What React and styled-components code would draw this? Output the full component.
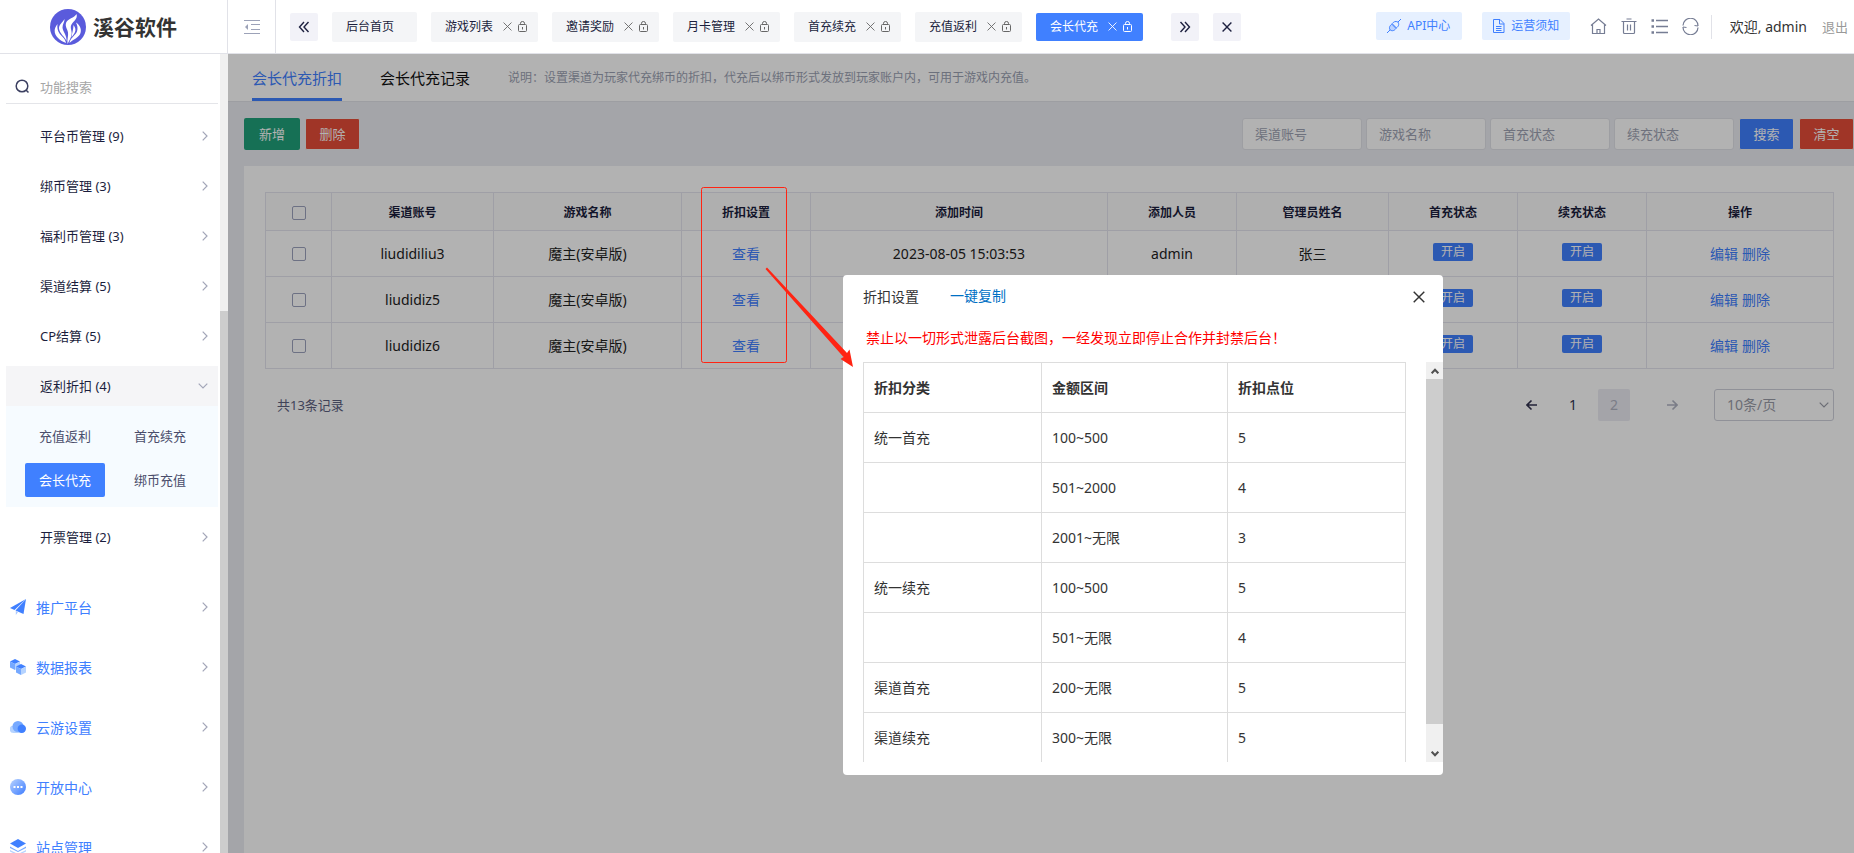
import React from "react";
import styled, { createGlobalStyle } from "styled-components";

const GlobalStyle = createGlobalStyle`
  *, *::before, *::after { box-sizing: border-box; }
  body {
    margin: 0;
    font-family: "Noto Sans", "Noto Sans CJK SC", sans-serif;
    font-size: 14px;
    line-height: 20px;
    color: #1b1e3d;
    background: #fff;
  }
  button, input, select { font: inherit; color: inherit; }
  button { border: 0; padding: 0; background: none; cursor: pointer; }
  a { color: inherit; text-decoration: none; }
  ul { list-style: none; margin: 0; padding: 0; }
`;

const Page = styled.div`
  display: flex;
  flex-direction: column;
  height: 100vh;
  overflow: hidden;
`;

/* ---------- header ---------- */

const Header = styled.header`
  display: flex;
  align-items: stretch;
  flex: none;
  height: 54px;
  border-bottom: 1px solid #e1e2e8;
  background: #fff;
`;

const Brand = styled.a`
  display: flex;
  align-items: center;
  justify-content: center;
  gap: 7px;
  flex: none;
  width: 228px;
  border-right: 1px solid #e1e2e8;
  font-size: 21px;
  line-height: 30px;
  font-weight: 700;
  color: #333;
`;

const CollapseButton = styled.button`
  display: flex;
  align-items: center;
  justify-content: center;
  width: 48px;
  border-right: 1px solid #e1e2e8;
`;

const TabStrip = styled.nav`
  display: flex;
  align-items: center;
  gap: 14px;
  flex: 1;
  min-width: 0;
  padding-left: 14px;
`;

const SquareButton = styled.button`
  display: flex;
  align-items: center;
  justify-content: center;
  width: 28px;
  height: 28px;
  border-radius: 2px;
  background: #f2f2f8;
  color: #1e2140;
  margin-left: ${(p) => (p.$spaced ? "14px" : "0")};
`;

const PageTab = styled.div`
  display: flex;
  align-items: center;
  height: ${(p) => (p.$active ? "28px" : "30px")};
  padding: 0 10px 0 14px;
  border-radius: 2px;
  font-size: 12px;
  background: ${(p) => (p.$active ? "#4080ff" : "#f4f5f7")};
  color: ${(p) => (p.$active ? "#fff" : "#1b1e3d")};
  white-space: nowrap;
`;

const HomeTab = styled(PageTab)`
  width: 85px;
`;

const TabIcon = styled.button`
  display: flex;
  color: ${(p) => (p.$active ? "#fff" : "#666")};
  margin-left: ${(p) => p.$gap};
`;

const HeaderTools = styled.div`
  display: flex;
  align-items: center;
  flex: none;
  padding-right: 6px;
`;

const HelpLink = styled.a`
  display: flex;
  align-items: center;
  justify-content: center;
  gap: 6px;
  width: ${(p) => p.$width};
  height: 28px;
  margin-right: 20px;
  margin-bottom: 2px;
  border-radius: 2px;
  background: #e6f0ff;
  color: #4080ff;
  font-size: 12px;
`;

const IconRow = styled.div`
  display: flex;
  gap: 14px;
  color: #767d94;
  button { display: flex; }
`;

const Account = styled.div`
  display: flex;
  align-items: center;
  gap: 15px;
  margin-left: 12px;
  padding-left: 18px;
  height: 24px;
  border-left: 1px solid #e1e2e8;
  color: #333;
  white-space: nowrap;
  a { font-size: 13px; color: #999; }
`;

/* ---------- sidebar ---------- */

const Body = styled.div`
  display: flex;
  flex: 1;
  min-height: 0;
`;

const Sidebar = styled.aside`
  display: flex;
  flex: none;
  width: 228px;
  overflow: hidden;
`;

const SidebarContent = styled.div`
  flex: 1;
  padding: 16px 2px 0 6px;
`;

const SidebarTrack = styled.div`
  width: 8px;
  padding-top: 257px;
  background: #f0f0f0;
`;

const SidebarThumb = styled.div`
  height: 100%;
  background: #cdcdcd;
`;

const Search = styled.label`
  display: flex;
  align-items: center;
  gap: 10px;
  height: 34px;
  padding-left: 9px;
  border-bottom: 1px solid #e4e5e9;
  input {
    width: 150px;
    border: 0;
    outline: 0;
    padding: 0;
    background: none;
    font-size: 13px;
  }
  input::placeholder { color: #a6a6a6; }
`;

const Menu = styled.ul`
  display: flex;
  flex-direction: column;
  gap: 10px;
  padding-top: 12px;
`;

const MenuLink = styled.button`
  display: flex;
  align-items: center;
  justify-content: space-between;
  width: 100%;
  height: 40px;
  padding: 0 10px 0 34px;
  font-size: 13px;
  text-align: left;
  background: ${(p) => (p.$open ? "#f5f5f7" : "none")};
`;

const SubMenu = styled.ul`
  display: grid;
  grid-template-columns: 80px 80px;
  gap: 10px 15px;
  padding: 13px 0 10px 19px;
  background: #f6fbff;
`;

const SubLink = styled.a`
  display: block;
  padding: 7px 0;
  border-radius: 2px;
  font-size: 13px;
  text-align: center;
  background: ${(p) => (p.$active ? "#4080ff" : "none")};
  color: ${(p) => (p.$active ? "#fff" : "#4a4d6b")};
`;

const GroupList = styled.ul`
  padding-top: 20px;
`;

const GroupLink = styled.button`
  display: flex;
  align-items: center;
  gap: 10px;
  width: 100%;
  height: 60px;
  padding: 0 10px 0 4px;
  color: #4080ff;
  text-align: left;
  span { flex: 1; padding-top: 2px; }
`;

/* ---------- main ---------- */

const Main = styled.main`
  position: relative;
  display: flex;
  flex-direction: column;
  flex: 1;
  min-width: 0;
  overflow: hidden;
  background: #ebedf3;
`;

const Overlay = styled.div`
  position: absolute;
  inset: 0;
  background: rgba(0, 0, 0, 0.3);
`;

const SectionTabs = styled.nav`
  display: flex;
  align-items: stretch;
  gap: 38px;
  flex: none;
  height: 48px;
  padding-left: 24px;
  border-bottom: 1px solid #e1e2e8;
  background: #fff;
`;

const SectionTab = styled.a`
  display: flex;
  align-items: center;
  padding-top: 3px;
  font-size: 15px;
  color: ${(p) => (p.$active ? "#4080ff" : "#111")};
  border-bottom: 3px solid ${(p) => (p.$active ? "#4080ff" : "transparent")};
`;

const Note = styled.p`
  margin: 0;
  padding-top: 14px;
  font-size: 12px;
  color: #9ba1b2;
`;

const Toolbar = styled.div`
  display: flex;
  align-items: center;
  justify-content: space-between;
  flex: none;
  height: 64px;
  padding-left: 16px;
`;

const ActionGroup = styled.div`
  display: flex;
  align-items: center;
  gap: 5px;
`;

const FilterGroup = styled.div`
  display: flex;
  gap: 4px;
`;

const tones = { green: "#20a17a", red: "#e64c38", blue: "#4080ff" };

const ActionButton = styled.button`
  flex: none;
  width: ${(p) => (p.$tone === "green" ? "56px" : "55px")};
  height: 32px;
  border: ${(p) => (p.$tone === "green" ? "0" : "1px solid #eee")};
  border-radius: 2px;
  background: ${(p) => tones[p.$tone]};
  color: #fff;
  font-size: 13px;
`;

const Filter = styled.input`
  width: 120px;
  height: 32px;
  padding: 0 12px;
  border: 1px solid #e1e2e8;
  border-radius: 3px;
  background: #fff;
  font-size: 13px;
  &::placeholder { color: #9ea3b3; }
`;

const Card = styled.section`
  flex: 1;
  margin-left: 16px;
  padding: 26px 20px 0 21px;
  background: #fff;
`;

const DataTable = styled.table`
  width: 100%;
  table-layout: fixed;
  border-collapse: collapse;
  color: #222;
  text-align: center;
  th, td {
    border: 1px solid #e4e4ee;
    padding: 0;
  }
  th {
    height: 38px;
    padding-top: 2px;
    background: #fbfbfb;
    color: #1b1e3d;
    font-size: 12px;
  }
  td { height: 46px; }
`;

const Check = styled.input`
  appearance: none;
  display: block;
  width: 14px;
  height: 14px;
  margin: 0 auto;
  border: 1px solid #9da2bd;
  border-radius: 2px;
`;

const CellLink = styled.a`
  color: #4080ff;
  & + & { margin-left: 4px; }
`;

const StatusButton = styled.button`
  display: block;
  width: 40px;
  height: 18px;
  margin: 0 auto 4px;
  border-radius: 2px;
  background: #4080ff;
  color: #fff;
  font-size: 12px;
  line-height: 18px;
`;

const Footer = styled.footer`
  display: flex;
  align-items: center;
  justify-content: space-between;
  padding: 20px 0 0 12px;
  font-size: 13px;
  color: #5c607f;
`;

const Pager = styled.nav`
  display: flex;
  align-items: center;
  gap: 9px;
`;

const PageButton = styled.button`
  display: flex;
  align-items: center;
  justify-content: center;
  width: 32px;
  height: 32px;
  border-radius: 2px;
  font-size: 14px;
  background: ${(p) => (p.$current ? "#ebebf3" : "none")};
  color: ${(p) => (p.$muted ? "#b0b3c2" : "#333350")};
  margin-left: ${(p) => (p.$apart ? "17px" : "0")};
`;

const SizePicker = styled.label`
  position: relative;
  display: flex;
  align-items: center;
  margin-left: 17px;
  color: #9a9ca8;
  select {
    appearance: none;
    width: 120px;
    height: 32px;
    padding: 0 12px;
    border: 1px solid #ced0da;
    border-radius: 3px;
    background: none;
    font-size: 14px;
  }
  svg {
    position: absolute;
    right: 5px;
    pointer-events: none;
  }
`;

/* ---------- dialog ---------- */

const Dialog = styled.div`
  position: absolute;
  left: 615px;
  top: 221px;
  width: 600px;
  height: 500px;
  display: flex;
  flex-direction: column;
  border-radius: 4px;
  background: #fff;
  color: #333;
`;

const DialogHead = styled.div`
  display: flex;
  align-items: center;
  height: 44px;
  padding: 0 18px 0 20px;
  h2 { margin: 0; font-size: 14px; font-weight: 400; }
  a { flex: 1; margin-left: 31px; padding-bottom: 2px; color: #0070c4; }
  button { display: flex; }
`;

const Warning = styled.p`
  margin: 0;
  padding: 9px 0 14px 23px;
  color: #f00;
`;

const DialogBody = styled.div`
  display: flex;
  justify-content: space-between;
  height: 400px;
  padding-left: 20px;
  overflow: hidden;
`;

const PriceTable = styled.table`
  width: 543px;
  table-layout: fixed;
  border-collapse: collapse;
  align-self: flex-start;
  text-align: left;
  th, td {
    height: 50px;
    border: 1px solid #ddd;
    padding: 0 10px;
  }
`;

const Scroller = styled.div`
  display: flex;
  flex-direction: column;
  width: 17px;
  background: #f0f0f0;
  button {
    display: flex;
    align-items: center;
    justify-content: center;
    height: 17px;
    color: #505050;
  }
  div { height: 345px; background: #cdcdcd; margin-bottom: auto; }
`;

const Annotation = styled.svg`
  position: absolute;
  left: 472px;
  top: 132px;
  pointer-events: none;
`;

/* ---------- icons ---------- */

const Stroke = ({ w, h, box, sw = 1, children }) => (
  <svg width={w} height={h} viewBox={box || `0 0 ${w} ${h}`} fill="none" stroke="currentColor" strokeWidth={sw} aria-hidden="true">
    {children}
  </svg>
);

const Logo = () => (
  <svg width="36" height="36" viewBox="0 0 36 36" aria-hidden="true">
    <circle cx="18" cy="18" r="18" fill="#5a5bdc" />
    <g fill="#fff">
      <path d="M26.500 5C28 10 23.500 12 21.500 15.500C19.500 19 22.500 22 21.500 26C21 29 19 32 17.500 35C17 30 18.500 27 18 23.500C17.500 20 15 18 16 14C17.500 9.500 24.500 9 26.500 5Z" />
      <path d="M14.500 10C14.800 13 12.500 15 12.500 18.500C12.700 22.500 17 26 16.500 32C15 28 9.500 24.500 9 19.500C8.800 15.500 13 13 14.500 10Z" />
      <path d="M7.500 15C7 18.500 7.500 21.500 9.500 24.500C11.500 27.500 15 29 16 34C12 32.500 6 29 4.800 23.500C4.200 20 5.500 17.500 7.500 15Z" />
      <path d="M26 13.500C29 15.500 32 19.500 30.500 24C29 29 23 30 19.500 34C20 29 25.500 26.500 27 22.500C28 19.500 27.500 16.500 26 13.500Z" />
      <path d="M23.500 16C25.500 18.500 26 21 24.800 23.500C24 25.500 22.500 26.500 21.500 28.500C22 24 23.500 20 23.500 16Z" />
    </g>
  </svg>
);

const CollapseIcon = () => (
  <svg width="16" height="14" viewBox="0 0 16 14" fill="none" stroke="#9ca2b8" strokeWidth="1" aria-hidden="true">
    <path d="M0 .5H16M7 4.500H16M7 9.500H16M0 13.500H16" />
    <path d="M4 4V10L1 7Z" fill="#9ca2b8" stroke="none" />
  </svg>
);

const DoubleChevron = ({ right }) => (
  <Stroke w={12} h={12} sw={1.400}>
    {right ? <path d="M1.500 1L6 6L1.500 11M6 1L10.500 6L6 11" /> : <path d="M6 1L1.500 6L6 11M10.500 1L6 6L10.500 11" />}
  </Stroke>
);

const Cross = ({ size = 9, sw = 1 }) => (
  <Stroke w={size} h={size} box="0 0 10 10" sw={sw}>
    <path d="M.6 .6L9.400 9.400M9.400 .6L.6 9.400" />
  </Stroke>
);

const Lock = () => (
  <Stroke w={10} h={11}>
    <path d="M.5 4.500Q.5 3.500 1.500 3.500H7.500Q8.500 3.500 8.500 4.500V9.500Q8.500 10.500 7.500 10.500H1.500Q.5 10.500 .5 9.500ZM2.500 3.500V2.300A2 1.800 0 0 1 6.500 2.300V3.500M4.500 6V8.500" />
  </Stroke>
);

const ChevronRight = () => (
  <Stroke w={6} h={10} sw={1.200}>
    <path d="M.7 .7L5 5L.7 9.300" stroke="#a3a6b8" />
  </Stroke>
);

const ChevronDown = ({ color = "#a3a6b8" }) => (
  <Stroke w={10} h={6} sw={1.200}>
    <path d="M.7 .7L5 5L9.300 .7" stroke={color} />
  </Stroke>
);

const SearchIcon = () => (
  <Stroke w={15} h={15} sw={1.500}>
    <circle cx="7" cy="7" r="5.800" stroke="#3c4061" />
    <path d="M11 11L13.500 13.500" stroke="#3c4061" />
  </Stroke>
);

const PlugIcon = () => (
  <Stroke w={14} h={14}>
    <path d="M0 14L3 11M11 3L14 0M3.200 11C1.500 8.500 3 6.500 4.800 5.200L9 9.400C7.500 11.500 5.500 12.500 3.200 11Z" fill="#bcd3ff" />
    <path d="M10.900 3C8.500 1.800 6.500 2.800 5.200 4.700L9.400 8.900C11.500 7.500 12.500 5.300 10.900 3Z" />
  </Stroke>
);

const DocIcon = () => (
  <Stroke w={13} h={14}>
    <path d="M1.500 .5H8L12 4.500V13.500H1.500ZM7.500 .5V5H12" />
    <path d="M4 7.500H9.500M4 9.500H9.500M4 11.500H9.500" />
  </Stroke>
);

const HomeIcon = () => (
  <Stroke w={17} h={17} sw={1.200}>
    <path d="M1 7.500L8.500 1L16 7.500M2.500 6.500V15.500H14.500V6.500M7 15.500V11.500H10V15.500" />
  </Stroke>
);

const TrashIcon = () => (
  <Stroke w={16} h={17} sw={1.200}>
    <path d="M.5 3.500H15.500M5.500 1H10.500M2.500 3.500V14.500Q2.500 15.500 3.500 15.500H12.500Q13.500 15.500 13.500 14.500V3.500M6.500 6.500V12.500M9.500 6.500V12.500" />
  </Stroke>
);

const ListIcon = () => (
  <Stroke w={17} h={17} sw={1.300}>
    <path d="M5 2.500H17M5 8.500H17M5 14.500H17" />
    <path d="M.5 2.500H3M.5 8.500H3M.5 14.500H3" strokeWidth="2.500" />
  </Stroke>
);

const RefreshIcon = () => (
  <Stroke w={17} h={17} sw={1.200}>
    <path d="M1 7.500A7.500 7.500 0 0 1 16 8M16 9.500A7.500 7.500 0 0 1 1 9" />
    <path d="M12.500 7.500L16 8M4.500 9.500L1 9" />
  </Stroke>
);

const Arrow = ({ right }) => (
  <Stroke w={12} h={12} sw={1.600}>
    {right ? <path d="M1 6H11M6.500 1.500L11 6L6.500 10.500" /> : <path d="M11 6H1M5.500 1.500L1 6L5.500 10.500" />}
  </Stroke>
);

const PlaneIcon = () => (
  <svg width="16" height="16" viewBox="0 0 16 16" aria-hidden="true">
    <path d="M16 0L0 9L4.500 11Z" fill="#4080ff" />
    <path d="M16 0L5.500 11.500L13.500 15Z" fill="#4080ff" />
    <path d="M5.800 12V16L8 13Z" fill="#a9c8ff" />
  </svg>
);

const Cube = ({ x, y }) => (
  <g transform={`translate(${x} ${y})`}>
    <path d="M0 2.500L5 0L10 2.500L5 5Z" fill="#4080ff" />
    <path d="M0 2.500L5 5V11L0 8.500Z" fill="#76a9ff" />
    <path d="M10 2.500L5 5V11L10 8.500Z" fill="#b5d3ff" />
  </g>
);

const CubesIcon = () => (
  <svg width="16" height="16" viewBox="0 0 16 16" aria-hidden="true">
    <Cube x={0} y={0} />
    <Cube x={6} y={5} />
  </svg>
);

const CloudIcon = () => (
  <svg width="16" height="16" viewBox="0 0 16 16" aria-hidden="true">
    <path d="M3.500 6.500A3.700 3.700 0 0 0 3.500 14H12V6.500Z" fill="#b5d3ff" />
    <circle cx="8" cy="7.500" r="5.500" fill="#76a9ff" />
    <circle cx="11.800" cy="9.800" r="4.200" fill="#4080ff" />
  </svg>
);

const DotsIcon = () => (
  <svg width="16" height="16" viewBox="0 0 16 16" aria-hidden="true">
    <defs>
      <linearGradient id="dots" x1="0" y1="0" x2="1" y2="1">
        <stop offset="0" stopColor="#b9d3ff" />
        <stop offset="1" stopColor="#3c7cff" />
      </linearGradient>
    </defs>
    <circle cx="8" cy="8" r="8" fill="url(#dots)" />
    <path d="M3.500 7H5.500V9H3.500ZM7 7H9V9H7ZM10.500 7H12.500V9H10.500Z" fill="#fff" />
  </svg>
);

const LayersIcon = () => (
  <svg width="16" height="16" viewBox="0 0 16 16" aria-hidden="true">
    <path d="M0 4.500L8 0L16 4.500L8 9Z" fill="#4080ff" />
    <path d="M0 7.500L8 12L16 7.500V9L8 13L0 9Z" fill="#76a9ff" />
    <path d="M0 11L8 15L16 11V12.500L8 16.500L0 12.500Z" fill="#b5d3ff" />
  </svg>
);

/* ---------- data ---------- */

const pageTabs = ["游戏列表", "邀请奖励", "月卡管理", "首充续充", "充值返利", "会长代充"];
const menuItems = ["平台币管理 (9)", "绑币管理 (3)", "福利币管理 (3)", "渠道结算 (5)", "CP结算 (5)"];
const subItems = ["充值返利", "首充续充", "会长代充", "绑币充值"];
const groups = [
  ["推广平台", PlaneIcon],
  ["数据报表", CubesIcon],
  ["云游设置", CloudIcon],
  ["开放中心", DotsIcon],
  ["站点管理", LayersIcon],
];
const filters = ["渠道账号", "游戏名称", "首充状态", "续充状态"];
const columns = [
  ["渠道账号", 162],
  ["游戏名称", 188],
  ["折扣设置", 129],
  ["添加时间", 297],
  ["添加人员", 129],
  ["管理员姓名", 152],
  ["首充状态", 129],
  ["续充状态", 129],
  ["操作", 187],
];
const checkWidth = 66;
const tableTotal = columns.reduce((sum, [, w]) => sum + w, checkWidth);
const share = (w) => ({ width: `${(w / tableTotal) * 100}%` });

const rows = [
  { account: "liudidiliu3", game: "魔主(安卓版)", time: "2023-08-05 15:03:53", operator: "admin", manager: "张三" },
  { account: "liudidiz5", game: "魔主(安卓版)" },
  { account: "liudidiz6", game: "魔主(安卓版)" },
];
const prices = [
  ["统一首充", "100~500", "5"],
  ["", "501~2000", "4"],
  ["", "2001~无限", "3"],
  ["统一续充", "100~500", "5"],
  ["", "501~无限", "4"],
  ["渠道首充", "200~无限", "5"],
  ["渠道续充", "300~无限", "5"],
];

export default function App() {
  return (
    <Page>
      <GlobalStyle />
      <Header>
        <Brand href="#home"><Logo />溪谷软件</Brand>
        <CollapseButton aria-label="收起菜单"><CollapseIcon /></CollapseButton>
        <TabStrip>
          <SquareButton aria-label="向左"><DoubleChevron /></SquareButton>
          <HomeTab>后台首页</HomeTab>
          {pageTabs.map((name) => {
            const active = name === "会长代充";
            return (
              <PageTab key={name} $active={active}>
                {name}
                <TabIcon $gap="10px" $active={active} aria-label={`关闭${name}`}><Cross /></TabIcon>
                <TabIcon $gap="6px" $active={active} aria-label={`锁定${name}`}><Lock /></TabIcon>
              </PageTab>
            );
          })}
          <SquareButton $spaced aria-label="向右"><DoubleChevron right /></SquareButton>
          <SquareButton aria-label="全部关闭"><Cross size={10} sw={1.400} /></SquareButton>
        </TabStrip>
        <HeaderTools>
          <HelpLink $width="86px" href="#api"><PlugIcon />API中心</HelpLink>
          <HelpLink $width="88px" href="#notice"><DocIcon />运营须知</HelpLink>
          <IconRow>
            <button aria-label="首页"><HomeIcon /></button>
            <button aria-label="清理"><TrashIcon /></button>
            <button aria-label="列表"><ListIcon /></button>
            <button aria-label="刷新"><RefreshIcon /></button>
          </IconRow>
          <Account>欢迎, admin<a href="#logout">退出</a></Account>
        </HeaderTools>
      </Header>

      <Body>
        <Sidebar>
          <SidebarContent>
            <Search>
              <SearchIcon />
              <input type="text" aria-label="功能搜索" placeholder="功能搜索" />
            </Search>
            <Menu>
              {menuItems.map((name) => (
                <li key={name}><MenuLink>{name}<ChevronRight /></MenuLink></li>
              ))}
              <li>
                <MenuLink $open>返利折扣 (4)<ChevronDown /></MenuLink>
                <SubMenu>
                  {subItems.map((name) => (
                    <li key={name}><SubLink href="#sub" $active={name === "会长代充"}>{name}</SubLink></li>
                  ))}
                </SubMenu>
              </li>
              <li><MenuLink>开票管理 (2)<ChevronRight /></MenuLink></li>
            </Menu>
            <GroupList>
              {groups.map(([name, Icon]) => (
                <li key={name}><GroupLink><Icon /><span>{name}</span><ChevronRight /></GroupLink></li>
              ))}
            </GroupList>
          </SidebarContent>
          <SidebarTrack><SidebarThumb /></SidebarTrack>
        </Sidebar>

        <Main>
          <SectionTabs>
            <SectionTab href="#discount" $active>会长代充折扣</SectionTab>
            <SectionTab href="#records">会长代充记录</SectionTab>
            <Note>说明：设置渠道为玩家代充绑币的折扣，代充后以绑币形式发放到玩家账户内，可用于游戏内充值。</Note>
          </SectionTabs>
          <Toolbar>
            <ActionGroup>
              <ActionButton $tone="green">新增</ActionButton>
              <ActionButton $tone="red">删除</ActionButton>
            </ActionGroup>
            <ActionGroup>
              <FilterGroup>
                {filters.map((name) => (
                  <Filter key={name} type="text" aria-label={name} placeholder={name} />
                ))}
              </FilterGroup>
              <ActionButton $tone="blue">搜索</ActionButton>
              <ActionButton $tone="red">清空</ActionButton>
            </ActionGroup>
          </Toolbar>
          <Card>
            <DataTable>
              <colgroup>
                <col style={share(checkWidth)} />
                {columns.map(([name, w]) => <col key={name} style={share(w)} />)}
              </colgroup>
              <thead>
                <tr>
                  <th><Check type="checkbox" aria-label="全选" /></th>
                  {columns.map(([name]) => <th key={name}>{name}</th>)}
                </tr>
              </thead>
              <tbody>
                {rows.map(({ account, game, time, operator, manager }) => (
                  <tr key={account}>
                    <td><Check type="checkbox" aria-label={account} /></td>
                    <td>{account}</td>
                    <td>{game}</td>
                    <td><CellLink href="#view">查看</CellLink></td>
                    <td>{time}</td>
                    <td>{operator}</td>
                    <td>{manager}</td>
                    <td><StatusButton>开启</StatusButton></td>
                    <td><StatusButton>开启</StatusButton></td>
                    <td><CellLink href="#edit">编辑</CellLink><CellLink href="#delete">删除</CellLink></td>
                  </tr>
                ))}
              </tbody>
            </DataTable>
            <Footer>
              共13条记录
              <Pager>
                <PageButton aria-label="上一页"><Arrow /></PageButton>
                <PageButton>1</PageButton>
                <PageButton $current $muted>2</PageButton>
                <PageButton $muted $apart aria-label="下一页"><Arrow right /></PageButton>
                <SizePicker>
                  <select aria-label="每页条数"><option>10条/页</option></select>
                  <ChevronDown color="#9a9ca8" />
                </SizePicker>
              </Pager>
            </Footer>
          </Card>

          <Overlay />

          <Dialog role="dialog" aria-label="折扣设置">
            <DialogHead>
              <h2>折扣设置</h2>
              <a href="#copy">一键复制</a>
              <button aria-label="关闭"><Cross size={12} sw={1.200} /></button>
            </DialogHead>
            <Warning>禁止以一切形式泄露后台截图，一经发现立即停止合作并封禁后台！</Warning>
            <DialogBody>
              <PriceTable>
                <colgroup>
                  <col style={{ width: "178px" }} />
                  <col style={{ width: "186px" }} />
                  <col style={{ width: "178px" }} />
                </colgroup>
                <thead>
                  <tr><th>折扣分类</th><th>金额区间</th><th>折扣点位</th></tr>
                </thead>
                <tbody>
                  {prices.map((cells, i) => (
                    <tr key={i}>{cells.map((text, j) => <td key={j}>{text}</td>)}</tr>
                  ))}
                </tbody>
              </PriceTable>
              <Scroller>
                <button aria-label="向上滚动">
                  <Stroke w={8} h={6} sw={2}><path d="M.7 5.300L4 1.700L7.300 5.300" /></Stroke>
                </button>
                <div />
                <button aria-label="向下滚动">
                  <Stroke w={8} h={6} sw={2}><path d="M.7 .7L4 4.300L7.300 .7" /></Stroke>
                </button>
              </Scroller>
            </DialogBody>
          </Dialog>

          <Annotation width="154" height="184" viewBox="0 0 154 184" aria-hidden="true">
            <rect x="1.500" y="1.500" width="85" height="175" rx="2" fill="none" stroke="#ff2413" />
            <path d="M65.500 83L67 81.500L147 167L149.500 163.500L153 181L140.500 173L143.500 171Z" fill="#ff2413" />
          </Annotation>
        </Main>
      </Body>
    </Page>
  );
}
